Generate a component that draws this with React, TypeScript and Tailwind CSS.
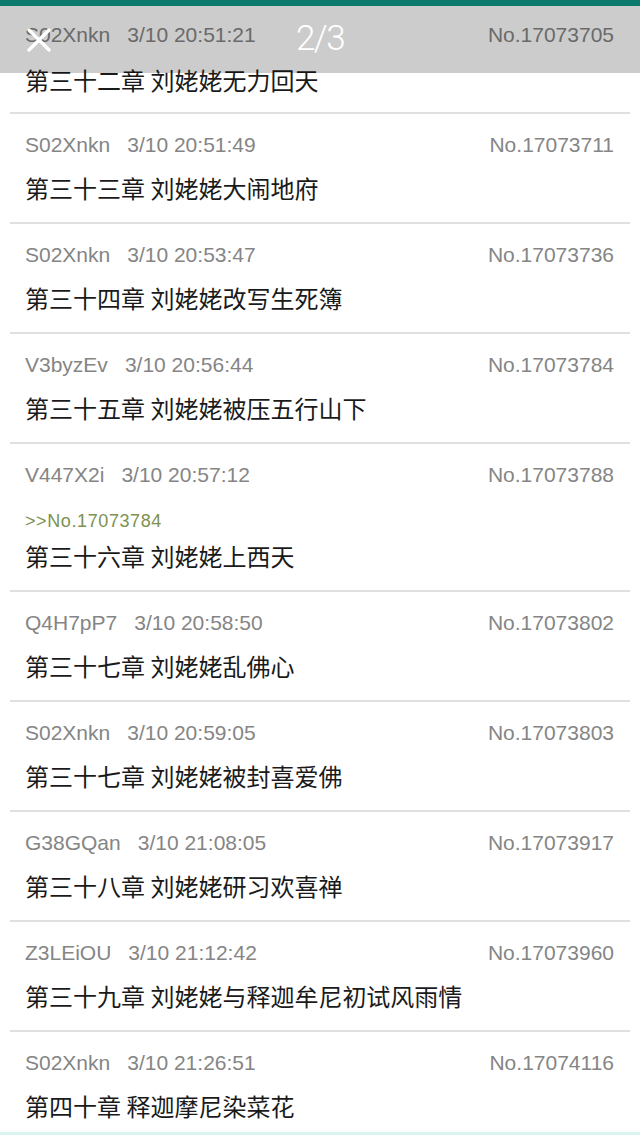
type Post = {
  id: string
  time: string
  no: string
  reply?: string
  title: string
}

const POSTS: Post[] = [
  { id: 'S02Xnkn', time: '3/10 20:51:21', no: '17073705', title: '第三十二章 刘姥姥无力回天' },
  { id: 'S02Xnkn', time: '3/10 20:51:49', no: '17073711', title: '第三十三章 刘姥姥大闹地府' },
  { id: 'S02Xnkn', time: '3/10 20:53:47', no: '17073736', title: '第三十四章 刘姥姥改写生死簿' },
  { id: 'V3byzEv', time: '3/10 20:56:44', no: '17073784', title: '第三十五章 刘姥姥被压五行山下' },
  { id: 'V447X2i', time: '3/10 20:57:12', no: '17073788', reply: '17073784', title: '第三十六章 刘姥姥上西天' },
  { id: 'Q4H7pP7', time: '3/10 20:58:50', no: '17073802', title: '第三十七章 刘姥姥乱佛心' },
  { id: 'S02Xnkn', time: '3/10 20:59:05', no: '17073803', title: '第三十七章 刘姥姥被封喜爱佛' },
  { id: 'G38GQan', time: '3/10 21:08:05', no: '17073917', title: '第三十八章 刘姥姥研习欢喜禅' },
  { id: 'Z3LEiOU', time: '3/10 21:12:42', no: '17073960', title: '第三十九章 刘姥姥与释迦牟尼初试风雨情' },
  { id: 'S02Xnkn', time: '3/10 21:26:51', no: '17074116', title: '第四十章 释迦摩尼染菜花' },
]

const SANS = "font-['Liberation_Sans','Noto_Sans_CJK_SC',sans-serif]"

function PostRow({ post, first, last }: { post: Post; first: boolean; last: boolean }) {
  return (
    <div>
      {first ? null : <div className="mx-[10px] h-[2px] bg-[#e0e0e0]" />}
      <div className={`px-[25px] ${first ? 'pt-[17px] pb-[17px]' : last ? 'pt-[19px] pb-[11px]' : 'pt-[19px] pb-[19px]'}`}>
        <div className={`flex h-6 items-center justify-between pr-px text-[21px] leading-6 text-[#858585] ${SANS}`}>
          <div className="flex gap-[17px]">
            <span>{post.id}</span>
            <span>{post.time}</span>
          </div>
          <span>No.{post.no}</span>
        </div>
        {post.reply ? (
          <div className={`mt-[22px] h-6 text-[18px] leading-6 tracking-[0.6px] text-[#7d9150] ${SANS}`}>
            &gt;&gt;No.{post.reply}
          </div>
        ) : null}
        <div
          className={`${post.reply ? 'mt-[8px]' : first ? 'mt-[18px]' : 'mt-[16px]'} h-[30px] font-['Noto_Sans_CJK_SC',sans-serif] text-[24px] leading-[30px] text-[#1a1a1a]`}
        >
          {post.title}
        </div>
      </div>
    </div>
  )
}

export default function App() {
  return (
    <div className="relative h-[1138px] w-[640px] overflow-hidden bg-white">
      <div className="h-[6px] bg-[#0b796b]" />

      <div className="flex flex-col">
        {POSTS.map((p, i) => (
          <PostRow key={p.no} post={p} first={i === 0} last={i === POSTS.length - 1} />
        ))}
      </div>
      <div className="h-[3px] bg-[#d9f3f0]" />

      {/* image viewer overlay bar */}
      <div className="absolute top-[6px] right-0 left-0 flex h-[67px] items-center bg-black/20">
        <button type="button" className="ml-[27px] flex size-[24px] items-center justify-center text-white">
          <svg width="24" height="24" viewBox="0 0 24 24" fill="none" stroke="currentColor" strokeWidth="3.4" strokeLinecap="round">
            <path d="M2 2 L22 22 M22 2 L2 22" />
          </svg>
        </button>
        <div className="pointer-events-none absolute top-0 left-0 flex h-full w-full items-center justify-center">
          <span className="pb-[3px] font-['Roboto',sans-serif] text-[35px] font-light leading-none tracking-[-1.5px] text-white">
            2/3
          </span>
        </div>
      </div>
    </div>
  )
}
